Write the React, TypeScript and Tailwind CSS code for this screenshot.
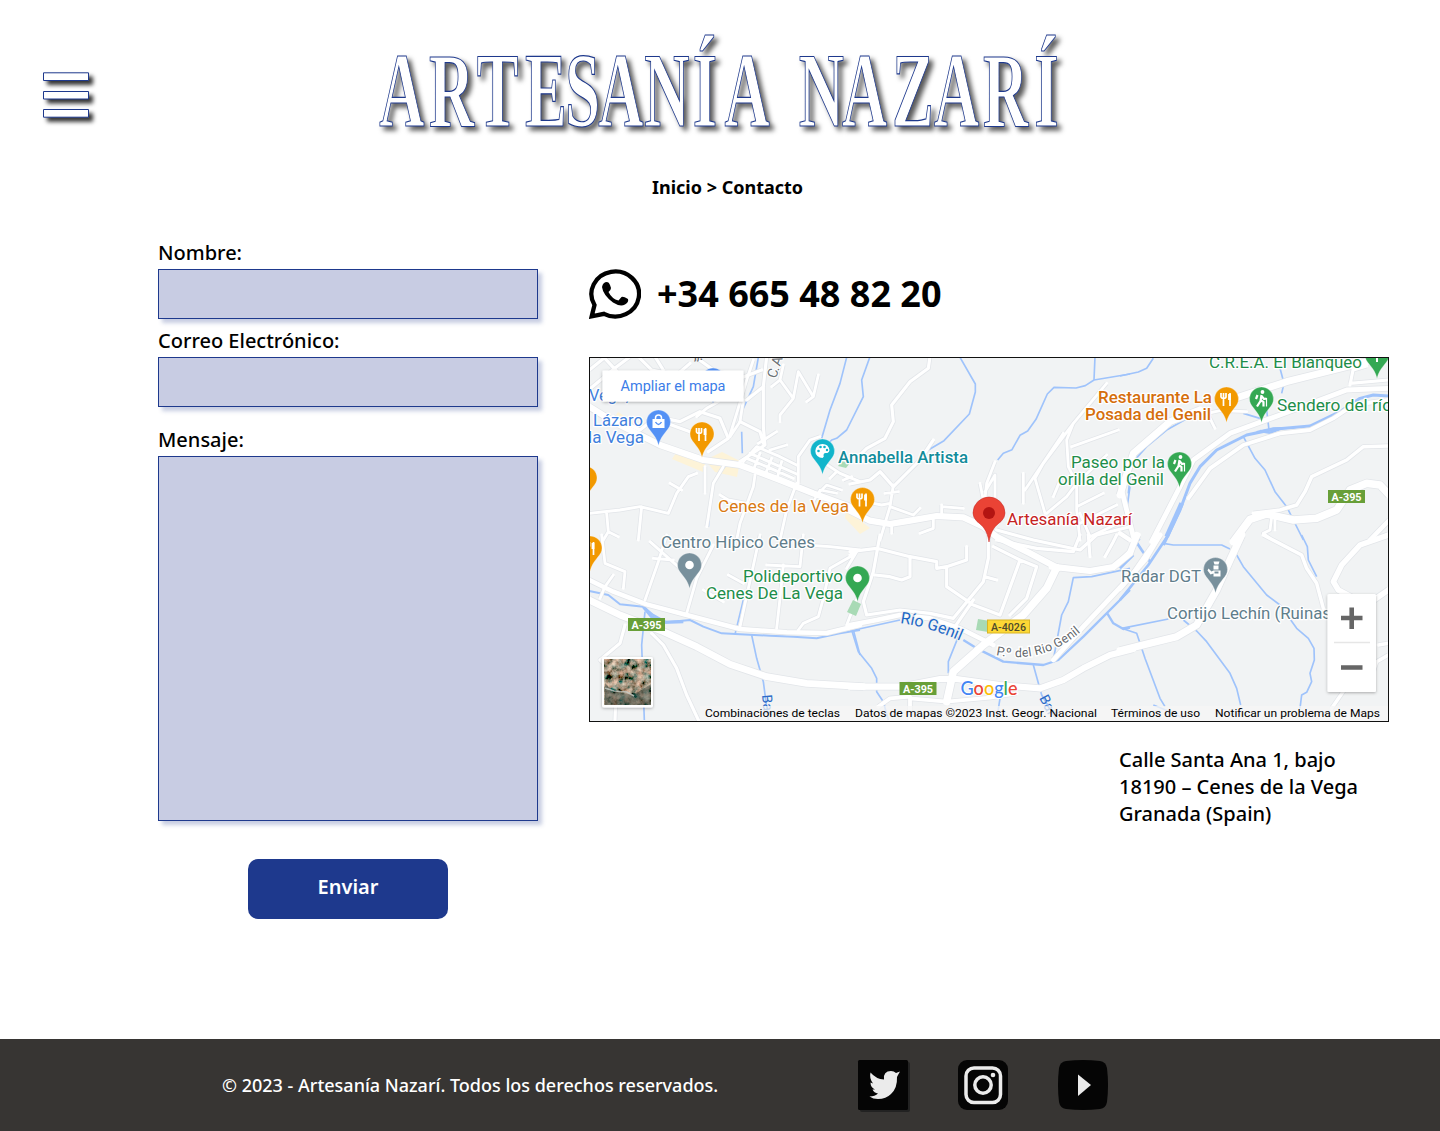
import React from "react";

type Road = { d: string; w: number };
type Tile = { x: number; y: number; roads: Road[]; water: Road[] };

// Map geometry, one entry per tile; each tile is drawn at three units per pixel.
const tiles: Tile[] = [
  {
    x: 580,
    y: 350,
    roads: [
      { d: "M28 118L110 50L150 20M28 60L75 22M70 20L130 85M180 25L215 60L290 75L330 40M225 20L250 60M345 20L400 60L480 85L545 60", w: 9 },
      { d: "M100 200L180 240L230 200L300 215L360 185L420 205L445 265L385 305M260 220L330 245", w: 9 },
      { d: "M415 155L380 175L350 200M490 150L480 215L450 260M520 30L500 90L470 190L450 255", w: 8 },
      { d: "M560 20L550 110L550 230L555 285L480 335M480 215L540 245L550 280M550 110L500 150", w: 9 },
      { d: "M575 110L600 90L640 145L655 65L700 140L715 75M610 45L600 90M640 145L600 195L600 215M700 140L680 155", w: 8 },
      { d: "M490 335L530 290L600 320L650 345M510 310L650 372M500 325L560 350L640 385M520 360L540 310M555 375L575 325M590 390L605 335", w: 8 },
      { d: "M535 280L590 245M570 300L620 285M655 400L655 320L690 270L720 260M650 400L620 480L600 570M735 340L780 370L840 395M750 385L770 365M790 390L815 380", w: 8 },
      { d: "M375 350V430M350 370L325 380L290 430L265 490L180 470L120 480L28 490M270 400L305 420M185 470L175 570M80 490L85 545L115 560M85 545L70 570", w: 8 },
      { d: "M430 350L400 400L385 500L380 530M525 375L520 410L480 520L470 570M420 435L445 450L500 460", w: 8 },
      { d: "M715 430L740 405L785 420M700 455L720 420L770 430", w: 7 },
      { d: "M28 170L100 215L240 285L370 330L480 345L600 390L700 430L850 485", w: 18 },
    ],
    water: [
      { d: "M535 22L520 110L490 175M485 245L487 310M435 350Q405 365 390 450L385 530", w: 5 },
      { d: "M870 20L845 90L850 140L800 240L770 265L755 270L740 285L720 335M800 22L780 100L750 180L725 265", w: 5 },
    ],
  },
  {
    x: 850,
    y: 350,
    roads: [
      { d: "M240 20L235 55L180 95L125 165L130 215L105 265L50 295L35 310M250 270L210 330L130 410L90 365L60 390L0 402", w: 9 },
      { d: "M105 430L145 425M130 405L120 470L90 570M120 470L190 495L210 475M70 460L95 465L120 460M125 520V550M275 465V500M275 470L340 475M250 510L250 535L210 550", w: 8 },
      { d: "M400 490L410 400L435 335M405 425L435 375V450M390 400L400 450", w: 8 },
      { d: "M770 100L670 220L580 340L555 385L585 490M670 220L650 270L655 350L680 400V480L690 570M640 250L525 420M520 370V460M610 440L635 380M665 290L805 240M590 490L650 440L680 400L770 315M680 470L760 430M690 490L720 560M690 520L800 465M720 560L825 510", w: 8 },
      { d: "M0 482L60 512L120 522L180 512L260 498L340 502L400 530L440 560L540 610L625 655", w: 18 },
      { d: "M440 540L550 570L690 600L740 555L840 530", w: 9 },
      { d: "M810 400L830 480L850 560", w: 14 },
    ],
    water: [
      { d: "M330 22L376 102V126L358 192L282 272L235 300M735 20L732 90L706 107L678 114L612 112L592 132L558 208L533 243L510 256L486 299L460 310L443 330M732 90L840 72", w: 5 },
      { d: "M840 410L830 480L855 560L870 570", w: 5 },
    ],
  },
  {
    x: 1120,
    y: 350,
    roads: [
      { d: "M0 435L40 310L150 215L240 180M345 145L500 95L640 60L800 20", w: 20 },
      { d: "M240 195L300 182L380 185M265 195L285 235", w: 8 },
      { d: "M95 575L180 410L220 330L330 250L480 195L600 150L680 120L805 115", w: 14 },
      { d: "M205 445L270 355L370 285L480 250L570 240L640 205L700 165L805 150", w: 11 },
      { d: "M700 55L690 105M700 60L740 48M690 100L805 90", w: 9 },
      { d: "M400 490L480 480L530 465L555 425L575 380L680 330L730 290L805 288", w: 10 },
      { d: "M340 575L390 508L440 492L520 510L590 505L650 480L690 420L740 400L780 405L808 435", w: 22 },
      { d: "M455 500L450 540L430 550L450 565M465 500V540", w: 8 },
      { d: "M750 570L808 510M0 550L30 570", w: 13 },
    ],
    water: [
      { d: "M0 78L55 66L80 55L100 25M480 55L492 100L485 130M440 180L447 240M25 430L35 340L80 290L140 240L220 195M370 190L420 205", w: 5 },
      { d: "M130 585L180 480L210 400L240 350L290 300L380 255L460 238L570 228L660 185L720 145L760 135L805 138", w: 9 },
      { d: "M370 260L405 325L435 360L465 425L500 470L550 570", w: 5 },
      { d: "M140 560L185 460", w: 14 },
      { d: "M410 247L460 236L485 235L450 248L420 243", w: 8 },
    ],
  },
  {
    x: 580,
    y: 535,
    roads: [
      { d: "M65 0L75 85L135 110L130 160M100 120L75 155L60 190M195 195L235 80L260 0M320 235L350 130L400 30M220 70L280 75M210 20L300 100", w: 8 },
      { d: "M445 120L490 145M370 165L430 200M480 275L540 0M560 90L660 95L670 0M590 280L600 190L610 90M655 285L670 265L715 245L730 190L750 100L820 60M750 35L840 45M675 30L750 35M800 100L830 50M800 270L835 180", w: 8 },
      { d: "M28 135L100 170L200 208L320 240L480 282L620 292L740 294L840 270", w: 13 },
      { d: "M28 195L120 240L250 290L350 335L450 388L560 425L680 445L850 455", w: 20 },
      { d: "M215 295L250 330L290 400L320 480L355 555M135 270L120 325L60 375L110 420L105 555", w: 9 },
    ],
    water: [
      { d: "M28 168L85 180L120 208L190 215L220 240L260 262L330 255L370 275L425 295L480 298L570 302L640 305L710 310L780 295L840 285", w: 6 },
      { d: "M190 215L215 245L250 262L310 260", w: 10 },
      { d: "M195 230L185 330L193 555M490 195L465 298M515 300L530 370L550 440L565 555M820 285L840 360", w: 5 },
    ],
  },
  {
    x: 850,
    y: 535,
    roads: [
      { d: "M0 50L80 40L180 65L260 80L260 100L290 95L350 75V35M90 0L70 110L40 200L50 240L150 225L240 235L310 250L400 140L415 70V0M290 95V155L370 210L450 240L510 75L430 35M510 75L560 95L530 190L480 240M405 125L440 135M75 120L120 125L155 135L180 125V65M0 60L15 50M315 275L370 195", w: 9 },
      { d: "M440 15L560 40L670 50L690 0M715 0L720 65M765 65L790 20L800 0", w: 9 },
      { d: "M0 270L80 255L150 240L240 250L330 280L430 330", w: 13 },
      { d: "M610 375L700 275L850 115L930 0", w: 14 },
      { d: "M620 98L590 160L520 240L400 330L310 410L290 500", w: 22 },
      { d: "M605 95L720 108L790 96L840 55L860 0", w: 18 },
      { d: "M0 455L150 455L270 432L320 432L450 450L570 460L640 435L700 400L780 360L850 342", w: 18 },
      { d: "M180 490L290 500L420 488L500 475M85 515L120 490L180 485V555", w: 11 },
    ],
    water: [
      { d: "M0 288L150 255M5 285L25 350L65 400L80 430V470L100 500L115 555M325 305L295 380V415M550 390L575 480L620 555M840 100L725 125L670 128L655 200L635 240L610 375M450 490L440 555", w: 5 },
      { d: "M340 315L380 340L460 380L580 390L625 375L700 305L840 165M770 232L790 265L820 282L840 278", w: 7 },
    ],
  },
  {
    x: 1120,
    y: 535,
    roads: [
      { d: "M0 347L90 325L170 305L230 270L290 165L330 75L365 0", w: 21 },
      { d: "M0 160L75 75L120 0M0 80L30 50L55 0", w: 14 },
      { d: "M430 0L545 60L560 100L590 145L610 220M805 325L775 330M805 360L770 380L760 410L690 440L635 520", w: 10 },
      { d: "M805 0L720 30L665 90L640 140L655 165L740 210L805 165", w: 16 },
    ],
    water: [
      { d: "M0 195L85 90L145 0M35 0L65 45L90 80M0 100L40 60", w: 8 },
      { d: "M130 25L160 30H305L330 42M350 60L370 95L440 180L480 210L530 280L565 310L582 340L583 375L570 415L575 440L560 472L545 480L540 520M145 252L5 280L50 295L75 370L120 490L135 515M190 255L230 288L260 320L330 415L350 460L362 510M545 0L562 35L565 75L590 125M100 510L150 530L190 550", w: 5 },
    ],
  },
];

function Roads() {
  return (
    <g fill="none" strokeLinejoin="round">
      {tiles.map((t, i) => (
        <g key={"w" + i} transform={`translate(${t.x} ${t.y}) scale(.33333)`} stroke="#9fc3fb">
          {t.water.map((r, j) => <path key={j} d={r.d} strokeWidth={r.w} />)}
        </g>
      ))}
      {tiles.map((t, i) => (
        <g key={"c" + i} transform={`translate(${t.x} ${t.y}) scale(.33333)`} stroke="#e2e5e9">
          {t.roads.map((r, j) => <path key={j} d={r.d} strokeWidth={r.w + 5} />)}
        </g>
      ))}
      {tiles.map((t, i) => (
        <g key={"r" + i} transform={`translate(${t.x} ${t.y}) scale(.33333)`} stroke="#fff" strokeLinecap="round">
          {t.roads.map((r, j) => <path key={j} d={r.d} strokeWidth={r.w + 0.5} />)}
        </g>
      ))}
    </g>
  );
}

type PinKind = "food" | "hike" | "bag" | "dot" | "art" | "police" | "tree";

// Marker centred on its round head; the tip is 23.5 units below.
function Pin({ x, y, color, kind }: { x: number; y: number; color: string; kind: PinKind }) {
  return (
    <g transform={`translate(${x} ${y})`}>
      <path d="M0 23.500C-1.500 17-4 14-7.500 9.500C-10.500 6-12 3.500-12 0A12 12 0 0 1 12 0C12 3.500 10.500 6 7.500 9.500C4 14 1.500 17 0 23.500Z" fill={color} stroke="#fff" strokeOpacity=".5" strokeWidth=".6" />
      {kind === "dot" && <circle r="4.300" fill="#fff" />}
      {kind === "food" && (
        <g fill="none" stroke="#fff" strokeWidth="2">
          <path d="M-3 0V7M3.500-6V7M-5.500-6V-2Q-5-.5-3-.5Q-.5-.5-.5-2V-6M-3-6V0" strokeWidth="1.700" />
          <path d="M3-5V1" strokeWidth="2.800" />
        </g>
      )}
      {kind === "hike" && (
        <g fill="none" stroke="#fff" strokeWidth="2.200">
          <circle cx="1" cy="-7" r="1.900" fill="#fff" stroke="none" />
          <path d="M0-4L-1 2L-4.500 7.500M-1 1L2 3V7.500M0-3L2.500 0L5-.5M-4-4L-5.500 0" />
          <path d="M5-1V7.500" strokeWidth="1.200" />
        </g>
      )}
      {kind === "bag" && (
        <g>
          <path d="M-6-3H6V6H-6Z" fill="#fff" />
          <path d="M-3-3V-4Q-3-7 0-7Q3-7 3-4V-3" fill="none" stroke="#fff" strokeWidth="1.500" />
          <path d="M-3 0Q0 5 3 0" fill="none" stroke={color} strokeWidth="1.400" />
        </g>
      )}
      {kind === "art" && (
        <g>
          <path d="M0-7A7 6.800 0 1 0 0 7Q2 6 1 4Q1 2 3 2H5Q7 1 7-1Q6-7 0-7Z" fill="#fff" />
          <g fill={color}><circle cx="-4" cy="0" r="1.300" /><circle cx="-2" cy="-4" r="1.300" /><circle cx="2" cy="-4" r="1.300" /><circle cx="4.500" cy="-1" r="1.200" /></g>
        </g>
      )}
      {kind === "police" && (
        <g fill="#fff"><path d="M-2-8H4L3-5H-1ZM-2-4H3V0H-2ZM-7-1L-4 2L-2 1H5V7H-2V4L-5 5L-8 1Z" /><path d="M-1 2H3V4H-1Z" fill={color} /></g>
      )}
      {kind === "tree" && <path d="M0-8L6 3H1V7H-1V3H-6Z" fill="#fff" />}
    </g>
  );
}

function Label({ x, y, w, color, children, size = 16.5, weight = 400 }: { x: number; y: number; w: number; color: string; children: string; size?: number; weight?: number }) {
  return (
    <text x={x} y={y} textLength={w} lengthAdjust="spacingAndGlyphs" fill={color} fontSize={size} fontWeight={weight} stroke="#fff" strokeWidth="2.500" strokeLinejoin="round" paintOrder="stroke">
      {children}
    </text>
  );
}

function Shield({ x, y, w, yellow, children }: { x: number; y: number; w: number; yellow?: boolean; children: string }) {
  return (
    <g>
      <rect x={x} y={y} width={w} height="13" fill={yellow ? "#fdd835" : "#689f38"} stroke={yellow ? "#d9b526" : "none"} />
      <text x={x + w / 2} y={y + 10.5} textAnchor="middle" fontSize="11" fontWeight={yellow ? 500 : 700} fill={yellow ? "#4e4a2c" : "#fff"} textLength={w - 7} lengthAdjust="spacingAndGlyphs">{children}</text>
    </g>
  );
}

function MapView() {
  const green = "#34a853";
  const greenText = "#1e8e4a";
  const slate = "#78909c";
  const slateText = "#607d8b";
  const blue = "#5491f5";
  const orange = "#f29900";
  return (
    <svg className="block h-[365px] w-[800px] font-normal" viewBox="589 357 800 365" fontFamily="Roboto, sans-serif">
      <defs>
        <filter id="soft" x="-20%" y="-20%" width="140%" height="150%"><feDropShadow dx="0" dy="1" stdDeviation="1.500" floodOpacity=".3" /></filter>
        <filter id="terrain" x="0" y="0" width="100%" height="100%">
          <feTurbulence type="fractalNoise" baseFrequency=".16" numOctaves="4" seed="8" />
          <feColorMatrix values="1.500 0 0 0 -.42  1 .4 0 0 -.42  .8 .4 0 0 -.4  0 0 0 0 1" />
        </filter>
        <path id="genil" d="M900 623Q930 627 965 643" />
        <path id="paseo" d="M996 655Q1044 665 1083 630" />
      </defs>
      <rect x="589" y="357" width="800" height="365" fill="#f1f3f4" />
      <g fill="#fdf3d8">
        <path d="M676 453L705 464L703 472L672 459ZM705 460L722 452L740 461L737 477L715 472ZM618 412L640 426L636 435L610 423ZM846 510L870 528L860 534L845 518Z" />
      </g>
      <Roads />
      <g fill="#a8dab5">
        <path d="M853 600L861 604L856 616L847 612ZM978 619L990 621L988 632L976 630ZM842 461L850 463L846 468L838 466Z" />
      </g>

      <Label x={589} y={400.500} w={40} color="#3f80dd">Vega,</Label>
      <Pin x={713} y={380} color={blue} kind="dot" />
      <text x="694" y="360" fontSize="14" fill="#5f6368">,,.</text>
      <text transform="translate(776 379) rotate(-72)" fontSize="14" fill="#6b7176" stroke="#fff" strokeWidth="2" paintOrder="stroke" textLength="22">C. A</text>

      <Label x={593} y={426} w={50} color="#3f80dd">Lázaro</Label>
      <Label x={588} y={443} w={56} color="#3f80dd">la Vega</Label>
      <Pin x={658.500} y={422} color={blue} kind="bag" />
      <Pin x={702} y={434} color={orange} kind="food" />
      <Pin x={585} y={478} color={orange} kind="food" />
      <Pin x={590} y={548} color={orange} kind="food" />
      <Pin x={822.500} y={451} color="#12b5cb" kind="art" />
      <Label x={838} y={463} w={130} color="#128c9b" weight={500}>Annabella Artista</Label>
      <Label x={718} y={512} w={131} color="#d97a13">Cenes de la Vega</Label>
      <Pin x={862.500} y={499.500} color={orange} kind="food" />
      <Label x={661} y={548} w={154} color={slateText}>Centro Hípico Cenes</Label>
      <Pin x={689.500} y={565} color={slate} kind="dot" />
      <Label x={743} y={582} w={100} color={greenText}>Polideportivo</Label>
      <Label x={706} y={599} w={137} color={greenText}>Cenes De La Vega</Label>
      <Pin x={857.500} y={578} color={green} kind="dot" />
      <Label x={1209} y={368} w={153} color={greenText}>C.R.E.A. El Blanqueo</Label>
      <Pin x={1377} y={355} color={green} kind="tree" />
      <Label x={1098} y={403} w={114} color="#d56e0c" weight={500}>Restaurante La</Label>
      <Label x={1085} y={420} w={126} color="#d56e0c" weight={500}>Posada del Genil</Label>
      <Pin x={1226.500} y={399} color={orange} kind="food" />
      <Pin x={1261.500} y={399} color={green} kind="hike" />
      <Label x={1277} y={411} w={115} color={greenText}>Sendero del río</Label>
      <Label x={1071} y={468} w={94} color={greenText}>Paseo por la</Label>
      <Label x={1058} y={485} w={106} color={greenText}>orilla del Genil</Label>
      <Pin x={1179.500} y={464} color={green} kind="hike" />
      <Label x={1007} y={525} w={125} color="#c5221f">Artesanía Nazarí</Label>
      <path d="M989 542C987 530 983 526 977 521.500Q973 517.500 973 513A16 16 0 0 1 1005 513Q1005 517.500 1001 521.500C995 526 991 530 989 542Z" fill="#ea4335" stroke="#c5221f" strokeWidth=".5" />
      <circle cx="989" cy="513" r="6" fill="#b31412" />
      <Label x={1121} y={582} w={80} color={slateText}>Radar DGT</Label>
      <Pin x={1215.500} y={569.500} color={slate} kind="police" />
      <Label x={1167} y={619} w={164} color={slateText}>Cortijo Lechín (Ruinas</Label>

      <text fontSize="16" fill="#1e68c6" stroke="#f1f3f4" strokeWidth="2" paintOrder="stroke"><textPath href="#genil">Río Genil</textPath></text>
      <text fontSize="12.500" fill="#63686d" stroke="#fff" strokeWidth="3" paintOrder="stroke"><textPath href="#paseo" textLength="91">P.º del Rio Genil</textPath></text>
      <text transform="translate(762 695) rotate(85)" fontSize="14" fill="#2c6bc8">Bar</text>
      <text transform="translate(1039 698) rotate(62)" fontSize="14" fill="#2c6bc8">Bar</text>

      <Shield x={628} y={618} w={37}>A-395</Shield>
      <Shield x={1328} y={490} w={37}>A-395</Shield>
      <Shield x={899.500} y={682} w={37}>A-395</Shield>
      <Shield x={987.500} y={620} w={42} yellow>A-4026</Shield>

      <rect x="700" y="706" width="689" height="16" fill="#f5f5f5" fillOpacity=".75" />
      <text x="960.500" y="695" fontFamily="Lato, sans-serif" fontSize="19" fontWeight="500" textLength="57" lengthAdjust="spacingAndGlyphs" stroke="#fff" strokeWidth="2" paintOrder="stroke">
        <tspan fill="#4285f4">G</tspan><tspan fill="#ea4335">o</tspan><tspan fill="#fbbc04">o</tspan><tspan fill="#4285f4">g</tspan><tspan fill="#34a853">l</tspan><tspan fill="#ea4335">e</tspan>
      </text>
      <g fontSize="11.500" fill="#000">
        <text x="705" y="717" textLength="135" lengthAdjust="spacingAndGlyphs">Combinaciones de teclas</text>
        <text x="855" y="717" textLength="242" lengthAdjust="spacingAndGlyphs">Datos de mapas ©2023 Inst. Geogr. Nacional</text>
        <text x="1111" y="717" textLength="89" lengthAdjust="spacingAndGlyphs">Términos de uso</text>
        <text x="1215" y="717" textLength="165" lengthAdjust="spacingAndGlyphs">Notificar un problema de Maps</text>
      </g>

      <rect x="602.500" y="370.500" width="141" height="31" rx="1" fill="#fff" filter="url(#soft)" />
      <text x="620.500" y="391" fontSize="15" fill="#3b7de8" textLength="105" lengthAdjust="spacingAndGlyphs">Ampliar el mapa</text>

      <rect x="602" y="657" width="51" height="50.500" rx="2" fill="#fff" filter="url(#soft)" />
      <rect x="604.500" y="659" width="46.500" height="46" filter="url(#terrain)" />
      <path d="M605 683Q612 692 622 693Q634 695 640 691L651 684V705H605Z" fill="#26352f" fillOpacity=".45" />
      <path d="M605 688L614 691L627 692L634 696" fill="none" stroke="#c4cbc6" strokeWidth="1.600" strokeOpacity=".8" />

      <rect x="1327.500" y="594" width="48.500" height="98" rx="1.500" fill="#fff" filter="url(#soft)" />
      <path d="M1334 642.500H1370" stroke="#e6e6e6" strokeWidth="1.500" />
      <path d="M1341 618H1362.500M1351.700 607.500V629M1341 667.500H1362.500" stroke="#666" strokeWidth="4.600" />
      <rect x="589.500" y="357.500" width="799" height="364" fill="none" stroke="#111" />
    </svg>
  );
}

function MenuIcon() {
  return (
    <svg className="h-[64px] w-[64px] drop-shadow-[4px_4px_2px_#000c]" viewBox="0 0 64 64" fill="#fff" stroke="#1e398d">
      <path d="M.5.800H45.500V8.500H.5ZM.5 19.500H45.500V27H.5ZM.5 37.500H45.500V45.200H.5Z" />
    </svg>
  );
}

function Wordmark() {
  return (
    <svg className="h-[120px] w-[700px] overflow-visible drop-shadow-[4px_4px_2.5px_#000000a6]" viewBox="376 22 700 120" role="img" aria-label="Artesanía Nazarí">
      <g transform="scale(.59 1)">
        <text
          y="126.500"
          x="643 727 808 890 958 1014 1092 1174 1228 1305 1354 1427 1512 1583 1666 1753"
          fontFamily="Liberation Serif, serif"
          fontWeight="700"
          fontSize="106"
          fill="#fff"
          stroke="#1e398d"
          strokeWidth="1"
          vectorEffect="non-scaling-stroke"
        >
          ARTESANÍA NAZARÍ
        </text>
      </g>
    </svg>
  );
}

function Field({ label, area, className }: { label: string; area?: boolean; className?: string }) {
  const box = "mt-[3px] block w-full resize-none rounded-none border border-[#1e398d] bg-[#c8cce3] shadow-[4px_4px_4px_#1e398d40] outline-none";
  return (
    <label className={"block leading-[27px] " + (className ?? "")}>
      {label}
      {area ? <textarea className={box + " h-[365px]"} /> : <input className={box + " h-[50px]"} />}
    </label>
  );
}

export default function App() {
  return (
    <div className="flex min-h-[1131px] w-[1440px] flex-col bg-white font-['Noto_Sans',sans-serif] text-[20px] font-medium text-black">
      <header className="flex h-[175px] items-start pl-[43px]">
        <button className="mt-[72px] w-[64px]" aria-label="Menú"><MenuIcon /></button>
        <h1 className="mt-[22px] ml-[269px]"><Wordmark /></h1>
      </header>
      <nav className="flex h-[64px] pl-[652px] text-[18px] leading-[25px] font-bold">Inicio &gt; Contacto</nav>

      <main className="flex h-[800px] pl-[158px]">
        <form className="flex w-[380px] flex-col">
          <Field label="Nombre:" />
          <Field label="Correo Electrónico:" className="mt-2" />
          <Field label="Mensaje:" area className="mt-[19px]" />
          <button type="button" className="mt-[38px] h-[60px] w-[200px] self-center rounded-[10px] bg-[#1e398d] pb-[5px] font-semibold text-white">Enviar</button>
        </form>
        <section className="ml-[51px] w-[800px] pt-[30px]">
          <div className="flex h-[50px] items-center gap-4">
            <svg className="h-[50px] w-[52px]" viewBox="0 0 52 50">
              <path d="M2.700 47.300L5.500 36A23.800 22.500 0 1 1 15 44.800Z" fill="none" stroke="#000" strokeWidth="4.300" />
              <path d="M13 18Q14 13 18 13Q20 13 21 16L22 19Q22 21 19.500 23Q23 30 29.500 31.500L32.500 28Q34 27 39 30Q40 33 36 35.500Q31 38 24 33.500Q14 26 13 18Z" />
            </svg>
            <span className="text-[36px] leading-[50px] font-bold whitespace-nowrap">+34 665 48 82 20</span>
          </div>
          <div className="mt-[38px]"><MapView /></div>
          <address className="mt-6 ml-[530px] leading-[27px] whitespace-nowrap not-italic">
            Calle Santa Ana 1, bajo<br />18190 – Cenes de la Vega<br />Granada (Spain)
          </address>
        </section>
      </main>

      <footer className="flex h-[92px] items-center bg-[#373533] pl-[222px] text-[18px] text-white">
        <p className="w-[636px]">© 2023 - Artesanía Nazarí. Todos los derechos reservados.</p>
        <div className="flex gap-[50px]">
          <svg className="h-[50px] w-[50px] overflow-visible" viewBox="0 0 50 50">
            <rect x="2" y="2" width="50" height="50" rx="2" fill="#222" />
            <rect width="50" height="50" rx="1.500" fill="#050505" />
            <path d="M12.500 12.500Q18 19 26 19.500Q25 11 33 11Q36 11 38 13L42 11.500L40 15L39 17Q39.500 28 33 34Q28 39 20 39Q15 39 11.500 36.500Q17 36.500 20 33.500Q16 33 14.500 29.500H17Q12.500 27.500 12.500 22.500L15 23.500Q11 18 12.500 12.500Z" fill="#ebebeb" />
          </svg>
          <svg className="h-[50px] w-[50px]" viewBox="0 0 50 50">
            <rect width="50" height="50" rx="9" fill="#050505" />
            <g fill="none" stroke="#ebebeb" strokeWidth="3.500">
              <rect x="8" y="8" width="34.500" height="34.500" rx="8" />
              <circle cx="25" cy="25" r="8.200" />
            </g>
            <circle cx="35" cy="15" r="2.300" fill="#ebebeb" />
          </svg>
          <svg className="h-[50px] w-[50px]" viewBox="0 0 50 50">
            <path d="M8 1Q25-1 42 1Q48 2 49 8Q51 25 49 42Q48 48 42 49Q25 51 8 49Q2 48 1 42Q-1 25 1 8Q2 2 8 1Z" fill="#050505" />
            <path d="M20 14.500L33 25L20 36Z" fill="#ebebeb" />
          </svg>
        </div>
      </footer>
    </div>
  );
}
